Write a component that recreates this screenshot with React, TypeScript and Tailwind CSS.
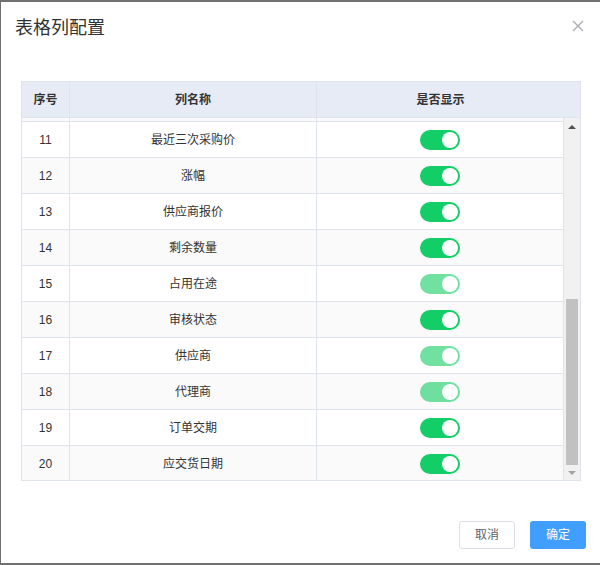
const rows = [
  { no: 11, name: "最近三次采购价" },
  { no: 12, name: "涨幅" },
  { no: 13, name: "供应商报价" },
  { no: 14, name: "剩余数量" },
  { no: 15, name: "占用在途", disabled: true },
  { no: 16, name: "审核状态" },
  { no: 17, name: "供应商", disabled: true },
  { no: 18, name: "代理商", disabled: true },
  { no: 19, name: "订单交期" },
  { no: 20, name: "应交货日期" },
];

function Toggle({ disabled }: { disabled?: boolean }) {
  return (
    <div
      className={
        "w-[40px] h-[20px] rounded-full bg-[#13ce66] flex justify-end items-center p-[2px] " +
        (disabled ? "opacity-60" : "")
      }
    >
      <div className="w-[16px] h-[16px] rounded-full bg-white" />
    </div>
  );
}

export default function App() {
  return (
    <div
      className="w-[600px] h-[565px] bg-[#707070] pt-[2px] pl-[1px] pb-[2px]"
      style={{ fontFamily: '"Liberation Sans", "Noto Sans CJK SC", sans-serif' }}
    >
      <div className="h-full bg-white flex flex-col">
        {/* header */}
        <div className="flex items-center justify-between pt-[14px] pl-[14px] pr-[16px]">
          <h1 className="text-[18px] leading-[24px] text-[#303133]">表格列配置</h1>
          <svg width="12" height="12" viewBox="0 0 12 12" className="mt-[-4px]">
            <path d="M1 1L11 11M11 1L1 11" stroke="#a8abb2" strokeWidth="1.3" />
          </svg>
        </div>

        {/* table */}
        <div className="mt-[41px] ml-[20px] w-[560px] border border-[#dfe3ee] text-[12px] text-[#333]">
          <div className="flex h-[36px] bg-[#e6ebf5] border-b border-[#dfe3ee] font-bold">
            <div className="w-[48px] border-r border-[#dfe3ee] flex items-center justify-center">序号</div>
            <div className="w-[247px] border-r border-[#dfe3ee] flex items-center justify-center">列名称</div>
            <div className="w-[247px] flex items-center justify-center">是否显示</div>
            <div className="flex-1" />
          </div>

          <div className="flex h-[362px]">
            {/* body, scrolled so that row 10 shows only its last pixels */}
            <div className="w-[542px] overflow-hidden">
              <div className="flex h-[4px] border-b border-[#dfe3ee] bg-[#fafafa]">
                <div className="w-[48px] border-r border-[#dfe3ee]" />
                <div className="w-[247px] border-r border-[#dfe3ee]" />
                <div className="w-[247px] border-r border-[#dfe3ee]" />
              </div>
              {rows.map((r) => (
                <div
                  key={r.no}
                  className={
                    "flex h-[36px] border-b border-[#dfe3ee] " +
                    (r.no % 2 === 0 ? "bg-[#fafafa]" : "bg-white")
                  }
                >
                  <div className="w-[48px] border-r border-[#dfe3ee] flex items-center justify-center">{r.no}</div>
                  <div className="w-[247px] border-r border-[#dfe3ee] flex items-center justify-center">{r.name}</div>
                  <div className="w-[247px] border-r border-[#dfe3ee] flex items-center justify-center">
                    <Toggle disabled={r.disabled} />
                  </div>
                </div>
              ))}
            </div>

            {/* scrollbar */}
            <div className="w-[16px] bg-[#f1f1f1] flex flex-col">
              <div className="h-[17px] flex items-center justify-center">
                <div className="w-0 h-0 border-x-[4px] border-x-transparent border-b-[4px] border-b-[#505050]" />
              </div>
              <div className="h-[164px]" />
              <div className="h-[166px] mx-[2px] bg-[#c1c1c1]" />
              <div className="flex-1 flex items-center justify-center">
                <div className="w-0 h-0 border-x-[4px] border-x-transparent border-t-[4px] border-t-[#a3a3a3]" />
              </div>
            </div>
          </div>
        </div>

        {/* footer */}
        <div className="mt-[40px] flex justify-end gap-[15px] pr-[14px] text-[12px]">
          <button className="w-[56px] h-[28px] border border-[#dcdfe6] rounded-[3px] bg-white text-[#606266]">
            取消
          </button>
          <button className="w-[56px] h-[28px] rounded-[3px] bg-[#409eff] text-white">确定</button>
        </div>
      </div>
    </div>
  );
}
